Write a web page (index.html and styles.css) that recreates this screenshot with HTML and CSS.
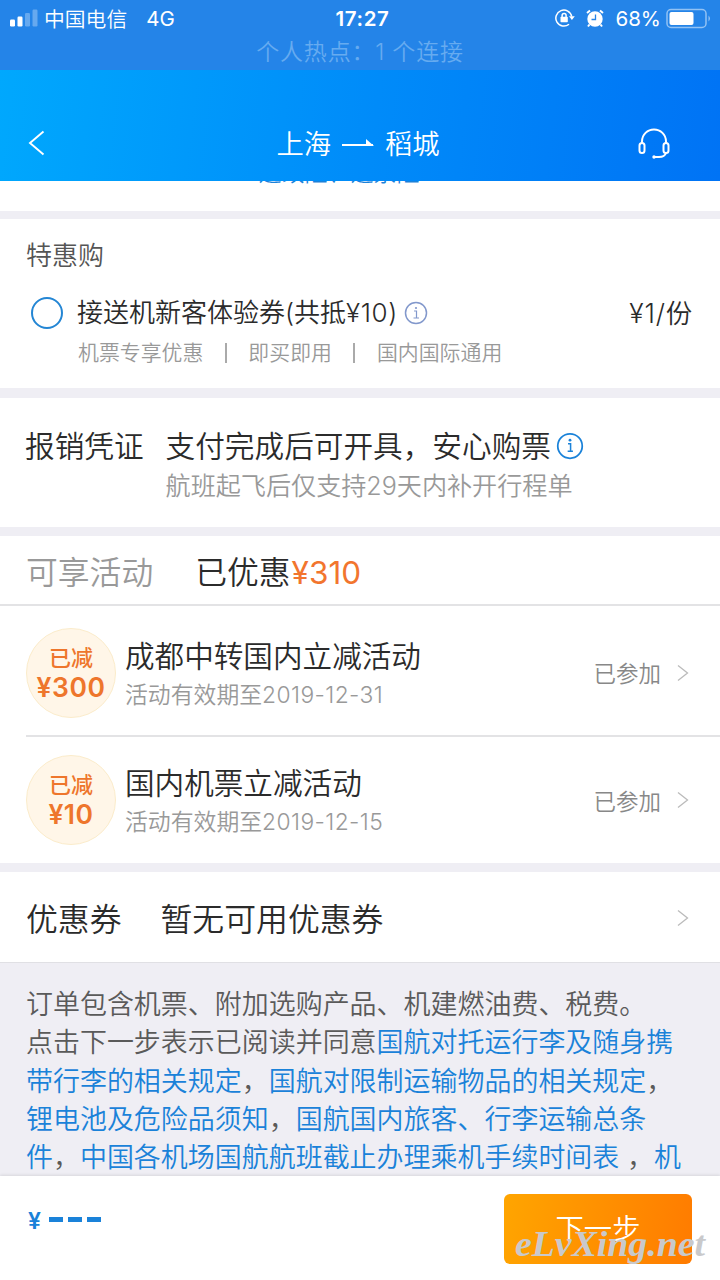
FILE: index.html
```html
<!DOCTYPE html>
<html lang="zh-CN">
<head>
<meta charset="utf-8">
<title>上海 — 稻城</title>
<link rel="stylesheet" href="styles.css">
</head>
<body>
<div class="screen">
  <div class="status">
    <div class="status-row">
      <div class="status-left">
        <svg class="signal" width="29" height="18" viewBox="0 0 29 18" fill="#fff"><rect x="0" y="10.500" width="5" height="7" rx="1.200"/><rect x="7.500" y="7.500" width="5" height="10" rx="1.200"/><rect x="15" y="4" width="5" height="13.500" rx="1.200" opacity=".3"/><rect x="22.500" y="0.500" width="5" height="17" rx="1.200" opacity=".3"/></svg>
        <span class="carrier">中国电信</span><span class="net">4G</span>
      </div>
      <div class="clock">17:27</div>
      <div class="status-right">
        <svg width="20" height="20" viewBox="0 0 20 20" fill="none" stroke="#fff" stroke-width="1.500"><path d="M16.700 8.500A8 8 0 1 0 14 16.200"/><path d="M14 8.300h5.800l-2.900 3.700z" fill="#fff" stroke="none"/><rect x="5.500" y="8.800" width="7.300" height="5.400" rx=".6" fill="#fff" stroke="none"/><path d="M7.100 9V7.400a2 2 0 0 1 4 0v1.800"/></svg>
        <svg class="alarm" width="18" height="19" viewBox="0 0 18 19" fill="none" stroke="#fff" stroke-width="2"><circle cx="9" cy="10" r="7.700" fill="#fff" stroke="none"/><path d="M1 4 4 1.500M17 4 14 1.500M3.500 15.500 2 17.500M14.500 15.500l1.500 2"/><path d="M9.500 5.500V10.500H5.500" stroke="#2484e8" stroke-width="1.300"/></svg>
        <span class="percent">68%</span>
        <svg class="battery" width="46" height="21" viewBox="0 0 46 21"><rect x="1" y="1.500" width="39" height="18" rx="4" fill="none" stroke="#fff" stroke-opacity=".5" stroke-width="1.500"/><rect x="3.500" y="4" width="24" height="13" rx="2" fill="#fff"/><path d="M42.500 7.500q3 3 0 6z" fill="#fff" fill-opacity=".5"/></svg>
      </div>
    </div>
    <div class="hotspot">个人热点：1 个连接</div>
  </div>

  <div class="nav">
    <svg class="back" width="18" height="26" viewBox="0 0 18 26" fill="none" stroke="#fff" stroke-width="1.900"><path d="M16.500 1.500 3 13 16.500 24.500"/></svg>
    <div class="route"><span>上海</span><svg width="32" height="12" viewBox="0 0 32 12"><path d="M0 7h31" stroke="#fff" stroke-width="2"/><path d="M24 1 32 8h-8z" fill="#fff"/></svg><span>稻城</span></div>
    <svg class="service" width="32" height="31" viewBox="0 0 32 31" fill="none" stroke="#fff" stroke-width="2"><path d="M4 15V13.500C4 6.500 9.500 1.500 16 1.500S28 6.500 28 13.500V15"/><rect x="1.500" y="15" width="5" height="10" rx="2.500"/><rect x="25.500" y="15" width="5" height="10" rx="2.500"/><path d="M28 25c-1 3-4 4-7 4h-5"/><circle cx="16" cy="29" r="1.700" fill="#fff" stroke="none"/></svg>
  </div>

  <div class="peek"><span>退改险、退票险</span></div>

  <section class="offer">
    <h2 class="offer-title">特惠购</h2>
    <div class="offer-row">
      <span class="radio"></span>
      <span class="offer-name">接送机新客体验券(共抵<em>¥10)</em></span>
      <svg class="info small" width="24" height="24" viewBox="0 0 24 24" fill="none" stroke="#8298cc" stroke-width="1.500"><circle cx="12" cy="12" r="10.500"/><path d="M10 10h2.500v7M9.500 17h5.500" stroke-width="1.200"/><circle cx="12" cy="7" r="1.100" fill="#8298cc" stroke="none"/></svg>
      <span class="price">¥1/份</span>
    </div>
    <div class="tags"><span>机票专享优惠</span><i></i><span>即买即用</span><i></i><span>国内国际通用</span></div>
  </section>

  <section class="receipt">
    <div class="receipt-label">报销凭证</div>
    <div>
      <div class="receipt-main">支付完成后可开具，安心购票<svg class="info" width="28" height="28" viewBox="0 0 24 24" fill="none" stroke="#1a82d9" stroke-width="1.500"><circle cx="12" cy="12" r="10.500"/><path d="M10.300 10h2.200v6.500M10 16.500h4.500" stroke-width="1.300"/><circle cx="12" cy="7" r="1.200" fill="#1a82d9" stroke="none"/></svg></div>
      <div class="receipt-sub">航班起飞后仅支持29天内补开行程单</div>
    </div>
  </section>

  <section class="promos">
    <div class="promo-head"><span class="muted">可享活动</span><span class="saved">已优惠<b>¥310</b></span></div>
    <div class="promo">
      <div class="badge"><span>已减</span><b>¥300</b></div>
      <div class="promo-text"><div class="promo-name">成都中转国内立减活动</div><div class="promo-date">活动有效期至<em>2019-12-31</em></div></div>
      <span class="joined">已参加</span>
      <svg class="chev" width="12" height="18" viewBox="0 0 12 18" fill="none" stroke="#bbb" stroke-width="1.300"><path d="M1 1.500 10.500 9 1 16.500"/></svg>
    </div>
    <div class="promo">
      <div class="badge"><span>已减</span><b>¥10</b></div>
      <div class="promo-text"><div class="promo-name">国内机票立减活动</div><div class="promo-date">活动有效期至<em>2019-12-15</em></div></div>
      <span class="joined">已参加</span>
      <svg class="chev" width="12" height="18" viewBox="0 0 12 18" fill="none" stroke="#bbb" stroke-width="1.300"><path d="M1 1.500 10.500 9 1 16.500"/></svg>
    </div>
  </section>

  <section class="coupon">
    <span class="coupon-label">优惠券</span><span class="coupon-value">暂无可用优惠券</span>
    <svg class="chev" width="12" height="18" viewBox="0 0 12 18" fill="none" stroke="#bbb" stroke-width="1.300"><path d="M1 1.500 10.500 9 1 16.500"/></svg>
  </section>

  <div class="terms">
    <div>订单包含机票、附加选购产品、机建燃油费、税费。</div>
    <div>点击下一步表示已阅读并同意<a>国航对托运行李及随身携</a></div>
    <div><a>带行李的相关规定</a>，<a>国航对限制运输物品的相关规定</a>，</div>
    <div><a>锂电池及危险品须知</a>，<a>国航国内旅客、行李运输总条</a></div>
    <div><a>件</a>，<a>中国各机场国航航班截止办理乘机手续时间表</a> <span class="comma">，</span><a>机</a></div>
  </div>

  <footer class="footer">
    <div class="total"><span>¥</span><i></i><i></i><i></i></div>
    <div class="next">下一步</div>
    <svg class="mark" width="200" height="56" viewBox="0 0 200 56"><text x="2" y="34" textLength="190" lengthAdjust="spacingAndGlyphs">eLvXing.net</text></svg>
  </footer>
</div>
</body>
</html>
```
FILE: styles.css
```css
* { box-sizing: border-box; }
body { margin: 0; background: #fff; font-family: Inter, "Noto Sans CJK SC", sans-serif; font-weight: 350; color: #2b2b2b; }
.screen { width: 720px; height: 1280px; overflow: hidden; display: flex; flex-direction: column; background: #efeef4; white-space: nowrap; }
.screen > * { flex: none; }
h2 { margin: 0; font-weight: inherit; }
svg { display: block; flex: none; }
i, em { font-style: normal; }

.status { height: 70px; background: #2484e8; color: #fff; }
.status-row { height: 36px; display: grid; grid-template-columns: 1fr auto 1fr; align-items: center; padding: 0 8px 0 10px; }
.status-left, .status-right { display: flex; align-items: center; }
.status-right { justify-content: flex-end; }
.signal { margin-right: 5px; margin-top: -1px; }
.carrier { font-size: 20.8px; }
.net { font-size: 20.500px; margin-left: 19px; font-weight: 400; }
.clock { font-size: 20.500px; font-weight: 600; letter-spacing: .6px; padding-left: 3px; }
.alarm { margin-left: 11px; }
.percent { font-size: 20.500px; margin: 0 5px 0 11px; font-weight: 400; }
.hotspot { font-size: 23px; line-height: 30px; letter-spacing: .8px; text-align: center; padding-top: 1px; color: #66abf0; }

.nav { height: 111px; display: grid; grid-template-columns: 1fr auto 1fr; align-items: center; padding: 36px 50px 0 27px; background: linear-gradient(97deg, #00a8fd 0%, #008bf9 52%, #0073f5 100%); color: #fff; }
.back { margin-top: -2px; }
.route { display: flex; align-items: center; gap: 11px; font-size: 27.3px; line-height: 36px; padding: 2px 0 0 19px; }
.route svg { margin-top: -1px; }
.service { justify-self: end; }

.peek { height: 30px; background: #fff; overflow: hidden; display: flex; justify-content: center; padding-right: 42px; }
.peek span { font-size: 23px; line-height: 30px; margin-top: -23px; color: #1a82d9; }

.offer { height: 169px; margin-top: 8px; background: #fff; padding: 18px 28px 0 26px; }
.offer-title { font-size: 26px; line-height: 38px; color: #555; }
.offer-row { display: flex; align-items: center; height: 40px; margin-top: 18px; font-size: 26px; line-height: 36px; }
.offer-name em { letter-spacing: .6px; }
.radio { width: 32px; height: 32px; border: 2px solid #2486d4; border-radius: 50%; margin: 0 14px 0 5px; }
.info.small { margin-left: 6px; }
.price { margin-left: auto; font-size: 26.500px; letter-spacing: .8px; margin-right: -1px; }
.tags { display: flex; align-items: center; font-size: 20.9px; line-height: 34px; margin: 3px 0 0 52px; color: #999; }
.tags i { width: 2px; height: 20px; margin: 0 21.500px; background: #aaa; }

.receipt { height: 129px; margin-top: 10px; background: #fff; padding: 27px 26px 0 25px; display: flex; gap: 22px; font-size: 29.650px; line-height: 42px; }
.receipt-main { display: flex; align-items: center; }
.receipt-main .info { margin-left: 5px; }
.receipt-sub { font-size: 25.1px; line-height: 38px; color: #999; }

.promos { height: 327px; margin-top: 9px; background: #fff; }
.promo-head { height: 70px; display: flex; align-items: center; padding: 0 26px; gap: 42px; font-size: 31.800px; border-bottom: 2px solid #e3e3e5; }
.muted { color: #999; }
.saved b { font-weight: 400; color: #f2752e; font-size: 31.500px; margin-left: 1px; }
.promo { height: 131px; margin-left: 26px; display: flex; align-items: center; padding: 4px 31px 0 0; border-bottom: 2px solid #e3e3e5; }
.promo:last-child { height: 126px; border: 0; padding-top: 0; }
.badge { width: 90px; height: 90px; border: 1px solid #fbeccb; border-radius: 50%; background: #fff6e8; color: #ee762c; display: flex; flex-direction: column; align-items: center; padding-top: 14px; }
.badge span { font-size: 22px; line-height: 30px; font-weight: 500; }
.badge b { font-size: 26.500px; line-height: 29px; font-weight: 600; letter-spacing: .5px; }
.promo-text { margin: 2px auto 0 9px; }
.promo-name { font-size: 29.600px; line-height: 42px; }
.promo-date { font-size: 22.850px; line-height: 36px; color: #999; }
.promo-date em { letter-spacing: .4px; }
.joined { font-size: 22.500px; color: #888; margin-right: 16px; padding-bottom: 1px; }

.coupon { height: 90px; margin-top: 9px; background: #fff; display: flex; align-items: center; padding: 2px 31px 0 26px; font-size: 31.850px; }
.coupon span { padding-bottom: 3px; }
.coupon-value { margin: 0 auto 0 39px; }

.terms { height: 214px; border-top: 1px solid #e0e0e4; padding: 23px 26px 0; font-size: 26.980px; line-height: 38.300px; color: #5a5a5a; overflow: hidden; }
.terms a { color: #1a82d9; }

.footer { height: 104px; position: relative; background: #fff; box-shadow: 0 -1px 3px rgba(0,0,0,.1); display: flex; justify-content: space-between; padding: 18px 28px 0; }
.total { height: 54px; display: flex; align-items: center; gap: 5px; color: #1a82d9; font-size: 23px; font-weight: 600; }
.total span { margin-right: 3px; }
.total i { width: 14px; height: 5px; margin-top: -4px; background: #1a82d9; }
.next { width: 188px; height: 70px; border-radius: 6px; background: linear-gradient(100deg, #ffa500, #ff7b00); color: #fff; font-size: 28.300px; line-height: 71px; text-align: center; }
.mark { position: absolute; left: 513px; top: 46px; }
.mark text { font-family: "Liberation Serif", serif; font-style: italic; font-weight: 700; font-size: 35px; fill: #c9c9cb; }
```
